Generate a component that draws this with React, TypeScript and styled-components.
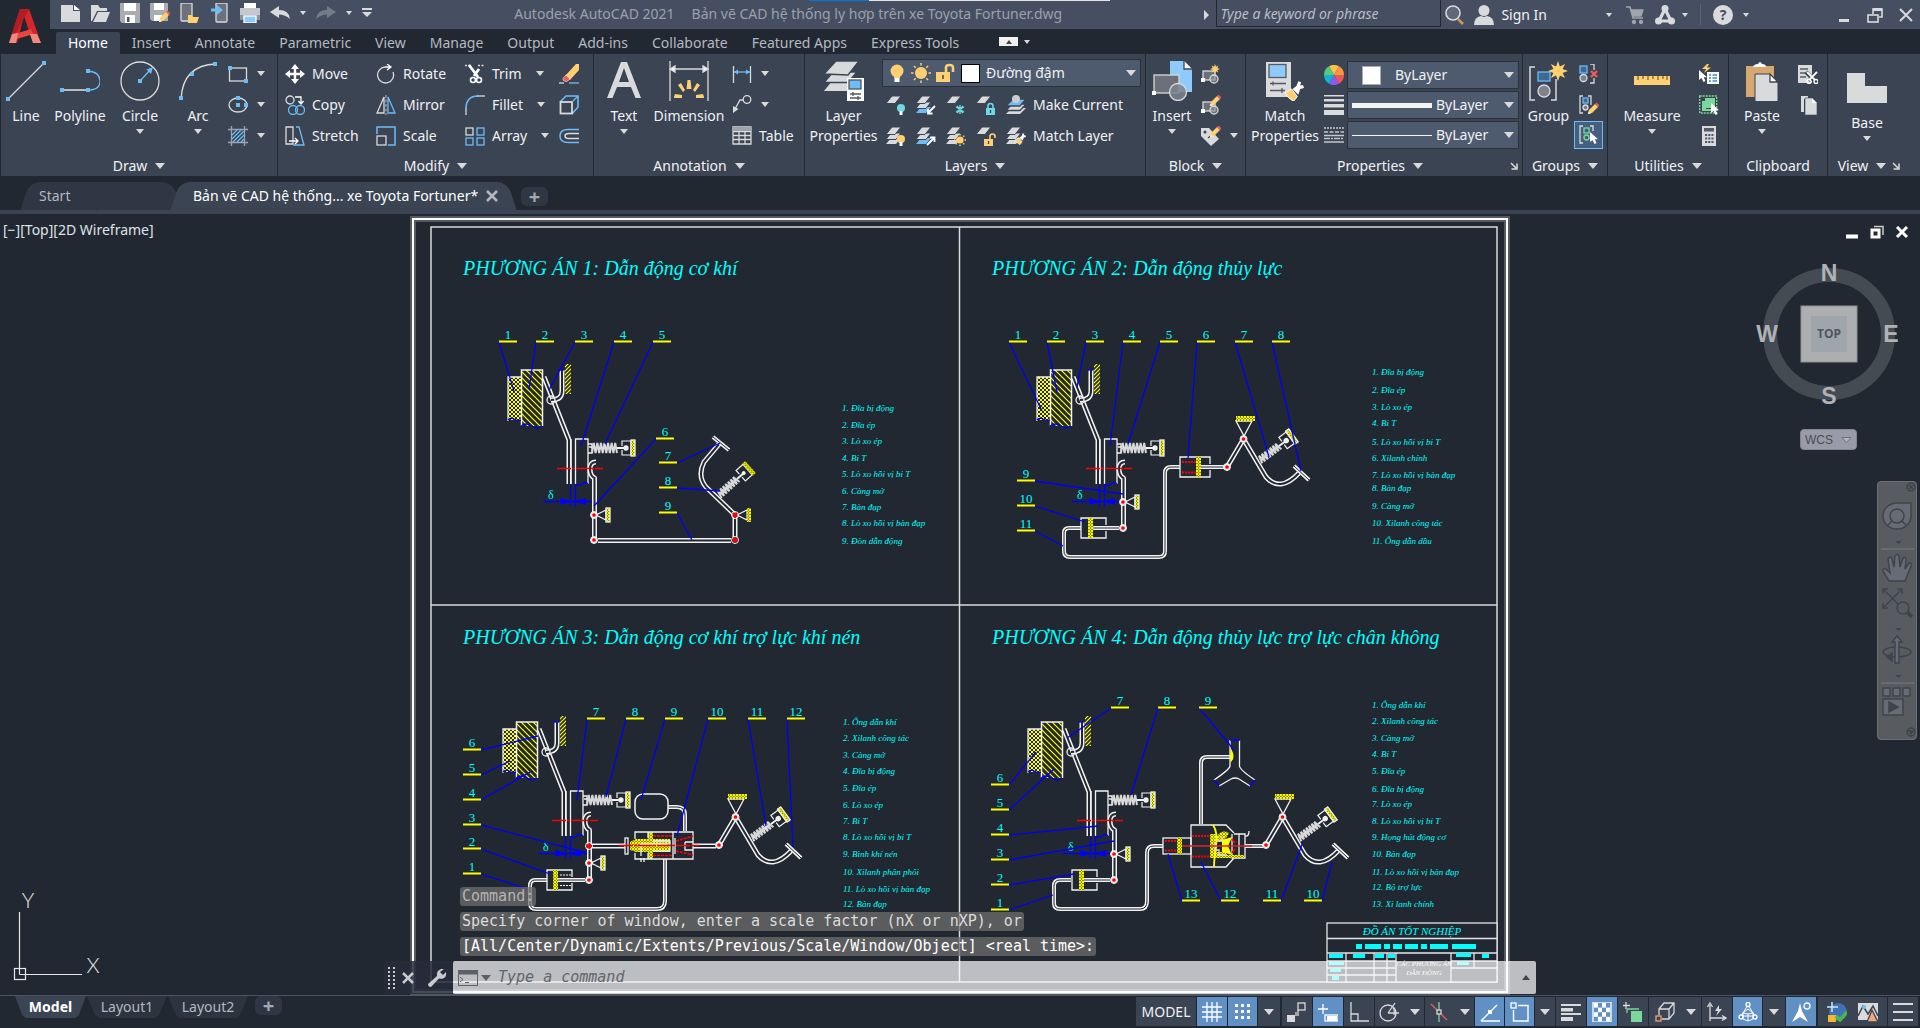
import React from "react";
import styled, { createGlobalStyle, css } from "styled-components";

const C = {
  ink: "#222831",
  panel: "#3b4453",
  title: "#464f61",
  field: "#4e5a6e",
  text: "#f0f1f3",
  dim: "#b4b9c1",
  g: "#d9dadb",
  b: "#6cbcf7",
  y: "#ffcf70",
  r: "#ef5b5b",
  gr: "#7bd79c",
};
const UI = '"Noto Sans", "Open Sans", sans-serif';
const MONO = '"DejaVu Sans Mono", monospace';

const Global = createGlobalStyle`
  * { box-sizing: border-box; }
  html, body { margin: 0; height: 100%; background: ${C.ink}; }
  body { font: 14px/20px ${UI}; color: ${C.text}; overflow: hidden; }
  button, select, input { font: inherit; color: inherit; background: none; border: 0; padding: 0; margin: 0; }
  button { cursor: pointer; white-space: nowrap; }
  svg { display: block; flex: none; }
`;

const Shell = styled.div`
  display: flex;
  flex-direction: column;
  height: 100vh;
`;

/* ---------- icons ---------- */
const Svg = ({ s = 20, children }: { s?: number; children: React.ReactNode }) => (
  <svg width={s} height={s} viewBox={`0 0 ${s} ${s}`} fill="none" stroke={C.g} strokeWidth="1.3" aria-hidden="true">
    {children}
  </svg>
);
const Dot = ({ x, y, c = C.b }: { x: number; y: number; c?: string }) => (
  <rect x={x - 2} y={y - 2} width="4" height="4" fill={c} stroke="none" />
);
const Caret = ({ w = 8, c = C.g }: { w?: number; c?: string }) => (
  <svg width={w} height={w / 2 + 1} viewBox={`0 0 ${w} ${w / 2 + 1}`} aria-hidden="true">
    <path d={`M0 0H${w}L${w / 2} ${w / 2 + 1}Z`} fill={c} />
  </svg>
);
const Launch = () => (
  <svg width="8" height="8" viewBox="0 0 8 8" stroke={C.g} fill="none" aria-hidden="true">
    <path d="M1 1L6 6M7 1.500V7H1.500" strokeWidth="1.500" />
  </svg>
);
const Pencil = ({ x = 0, y = 0 }) => (
  <g transform={`translate(${x} ${y})`} stroke="none">
    <path d="M0 10L1 6L7 0L10 3L4 9Z" fill={C.y} />
    <path d="M7 0L8.500 -1.500L11.500 1.500L10 3Z" fill={C.r} />
    <path d="M0 10L.6 7.500L2.500 9.400Z" fill="#fff" />
  </g>
);
const Cursor = ({ x = 0, y = 0 }) => (
  <path transform={`translate(${x} ${y})`} d="M0 0V10L2.500 8L4.500 12L6.500 11L4.700 7.300H8Z" fill="#fff" stroke="none" />
);
const Sheets = ({ last = C.g, n = 3 }: { last?: string; n?: number }) => (
  <g stroke="none">
    {n > 2 && <path d="M0 18L5 12H15L10 18Z" fill={last} />}
    {n > 2 && <path d="M0 13.500L5 7H15L10 13.500Z" fill={C.g} stroke={C.panel} strokeWidth="1" />}
    <path d="M0 8.500L6 1H15L9 8.500Z" fill={C.g} stroke={C.panel} strokeWidth="1" />
  </g>
);
const Bulb = ({ x = 0, y = 0, c = C.y }) => (
  <g transform={`translate(${x} ${y})`} stroke="none">
    <circle cx="4" cy="4" r="4" fill={c} />
    <rect x="2.500" y="7" width="3" height="4" fill="#fff" />
  </g>
);
const Lock = ({ x = 0, y = 0, c = C.y, open = false }) => (
  <g transform={`translate(${x} ${y})`}>
    <rect x="0" y="5" width="9" height="7" fill={c} stroke="none" />
    <path d={open ? "M6 5V2.500Q6 0 8.500 0T11 2.500V4" : "M2 5V3Q2 .5 4.500 .5T7 3V5"} stroke={c} strokeWidth="1.600" />
    <path d="M4.500 7V10" stroke={C.panel} />
  </g>
);
const SunRays = ({ cx, cy, r }: { cx: number; cy: number; r: number }) => (
  <g stroke={C.y} strokeWidth="1.500">
    <circle cx={cx} cy={cy} r={r * 0.6} fill={C.y} stroke="none" />
    {[0, 45, 90, 135, 180, 225, 270, 315].map((a) => (
      <path key={a} d={`M${cx} ${cy - r}V${cy - r * 0.75}`} transform={`rotate(${a} ${cx} ${cy})`} />
    ))}
  </g>
);
const Star = ({ cx, cy, r }: { cx: number; cy: number; r: number }) => {
  const p = Array.from({ length: 16 }, (_, i) => {
    const q = i % 2 ? r * 0.5 : r;
    return `${(cx + q * Math.sin((i * Math.PI) / 8)).toFixed(1)},${(cy - q * Math.cos((i * Math.PI) / 8)).toFixed(1)}`;
  });
  return <polygon points={p.join(" ")} fill={C.y} stroke="none" />;
};
const BlockMark = () => (
  <g>
    <rect x="2" y="7" width="12" height="9" fill="#6b707b" />
    <circle cx="13" cy="15" r="4" fill="#8a8e97" fillOpacity=".6" />
    <Dot x={2} y={16} c="#fff" />
  </g>
);
const Brush = ({ x = 0, y = 0, k = 1 }) => (
  <g transform={`translate(${x} ${y}) scale(${k})`} stroke="none">
    <path d="M0 5L7 1L13 9L9 14Q3 11 0 5Z" fill={C.y} stroke="#fff" strokeWidth="1" />
    <path d="M8 1L12 -2L14 -7L17 -6L16 -3L19 -3L20 0L16 1L14 7Z" fill="#fff" />
  </g>
);

const I: Record<string, React.ReactNode> = {
  line: <><path d="M2 38L38 2" /><Dot x={2} y={38} /><Dot x={38} y={2} /></>,
  poly: <><path d="M2 29H28" stroke="#fff" /><path d="M28 10Q40 11 40 20T28 29" stroke={C.b} /><Dot x={2} y={29} /><Dot x={28} y={29} /><Dot x={28} y={10} /></>,
  circle: <><circle cx="20" cy="20" r="19" /><path d="M20 20L31 8" stroke={C.b} /><path d="M33 6L31 13L26.500 8.500Z" fill={C.b} stroke="none" /><Dot x={20} y={20} /></>,
  arc: <><path d="M3 38Q5 4 38 3" /><Dot x={3} y={37} /><Dot x={14} y={13} /><Dot x={37} y={3} /></>,
  rect: <><rect x="1.500" y="4" width="17" height="13" /><Dot x={2} y={4} /><Dot x={18} y={17} /></>,
  ellipse: <><ellipse cx="10" cy="10" rx="9" ry="7" /><Dot x={10} y={10} /><Dot x={10} y={3} /><Dot x={18} y={10} /></>,
  hatch: <><path d="M0 3.500H20M0 16.500H20M3.500 0V20M16.500 0V20" stroke="#9da2ab" /><path d="M4 9L9 4M4 13L13 4M5 16L16 5M9 16L16 9M13 16L16 13" stroke={C.b} /></>,
  move: <path d="M10 0L14 5H11.200V8.800H15V6L20 10L15 14V11.200H11.200V15H14L10 20L6 15H8.800V11.200H5V14L0 10L5 6V8.800H8.800V5H6Z" fill="#fff" stroke="none" />,
  copy: <><circle cx="5" cy="5" r="4" /><path d="M10 2H16V8M13.500 6L16 9L18.500 6" stroke="#fff" /><circle cx="8" cy="15" r="4.500" stroke={C.b} /><circle cx="15" cy="15" r="4.500" stroke={C.b} /></>,
  stretch: <><path d="M1 1H8V18H1Z" /><path d="M11 1H14L19 19H8" stroke={C.b} /><path d="M4 15H12M10 12L13 15L10 18" stroke="#fff" /></>,
  rotate: <><path d="M9 3A8 8 0 1 0 17 8" /><path d="M9 3H15M11 0L15 3L11 6" stroke="#fff" /></>,
  mirror: <><path d="M8 2V18H1Z" /><path d="M12 2V18H19Z" stroke={C.b} /><path d="M10 0V20" strokeDasharray="3 1.500" stroke="#9da2ab" /></>,
  scale: <><path d="M1 8V1H19V19H12" stroke={C.b} strokeWidth="1.500" /><rect x="1" y="10" width="9" height="9" /></>,
  trim: <><path d="M0 1.500H6M13 1.500H20" strokeDasharray="2 1.500" /><path d="M4 1L13 13M14 5L9 12" stroke="#fff" strokeWidth="2.800" /><circle cx="8" cy="16" r="2.500" stroke="#fff" strokeWidth="1.600" /><circle cx="14" cy="16" r="2.500" stroke="#fff" strokeWidth="1.600" /></>,
  fillet: <><path d="M1 20V13" /><path d="M1 14Q1 1 13 1" stroke={C.b} strokeWidth="1.600" /><path d="M12 1H20" /></>,
  array: <><rect x="1" y="2" width="7" height="7" /><rect x="12" y="2" width="7" height="7" stroke={C.b} /><rect x="1" y="12" width="7" height="7" stroke={C.b} /><rect x="12" y="12" width="7" height="7" stroke={C.b} /></>,
  erase: <><path d="M17 0H20V6L11 16L6 12Z" fill={C.y} stroke="none" /><path d="M7 11L11 15Q8 19 5 17T7 11Z" fill={C.r} stroke="#fff" strokeWidth=".5" /><path d="M0 19H5" /><path d="M10 19H20" stroke={C.b} /></>,
  solid: <><path d="M1 7L7 1H19V12L13 19" stroke={C.b} strokeWidth="1.600" /><rect x="1.500" y="7" width="11.500" height="11.500" stroke="#d9dadb" strokeWidth="1.800" /><path d="M13 7L19 1" stroke={C.b} /></>,
  offset: <><path d="M20 3.500H9Q1 3.500 1 10T9 16.500H20" stroke={C.b} strokeWidth="1.500" /><path d="M20 7.500H10Q6 7.500 6 10T10 12.500H20" strokeWidth="1.500" /></>,
  text: <path d="M17 1H23L37 37H31.500L27 26H13L8.500 37H3ZM20 7L15 21H25Z" fill={C.g} stroke="none" fillRule="evenodd" />,
  dim: <><path d="M1 0V40M39 0V40" /><path d="M2 8H38" /><path d="M1 8L6 5V11ZM39 8L34 5V11Z" fill="#fff" /><path d="M18.500 19H21.500L22.500 28H17.500ZM9 24L12 22L16 29L14 31ZM31 24L28 22L24 29L26 31ZM5 36L6 33L13 34V37H5ZM35 36L34 33L27 34V37H35Z" fill={C.y} stroke="none" /></>,
  linear: <><path d="M1.500 2V19M18.500 2V19" /><path d="M2 8H18" stroke={C.b} /><path d="M2 8L6 5.500V10.500ZM18 8L14 5.500V10.500Z" fill={C.b} stroke="none" /></>,
  leader: <><circle cx="15" cy="4.500" r="3.800" /><path d="M11 5H8L3 14" /><path d="M1 18V11L6.500 14Z" fill={C.g} stroke="none" /></>,
  table: <><path d="M1 1H19V18H1ZM1 5.500H19M1 9.500H19M1 13.500H19M7 5V18M13 5V18" /><path d="M1 1H19V5H1Z" fill="#9da2ab" stroke="none" /></>,
  layerProps: <g stroke="none"><path d="M0 30L8 20H30L24 30Z" fill={C.g} /><path d="M0 21.500L9 11H33L24 21.500Z" fill={C.g} stroke={C.panel} strokeWidth="1.500" /><path d="M0 13L12 0H35L24 14Z" fill={C.g} stroke={C.panel} /><rect x="23" y="17" width="17" height="23" fill="#fff" /><rect x="25" y="19" width="12" height="9" fill={C.b} stroke="#555" /><path d="M26 33H37M26 37H37M29 31V35M34 35V39" stroke="#555" /></g>,
  lOff: <><Sheets n={1} /><Bulb x={11} y={9} c="#6ed8e4" /></>,
  lIso: <><Sheets last={C.b} /><path d="M19 11L12 18M12 14V18.500H16.500" stroke="#fff" strokeWidth="1.800" /></>,
  lFrz: <><Sheets n={1} /><path d="M14 10V19M10 12L18 17M18 12L10 17M11 11L17 18M17 11L11 18" stroke="#6ed8e4" strokeWidth="1.400" /></>,
  lLock: <><Sheets n={1} /><Lock x={10} y={8} c="#6ed8e4" /></>,
  lCur: <><path d="M0 19L6 13H20L14 19Z" fill={C.g} stroke="none" /><path d="M0 15.500L6 9H20L14 15.500Z" fill={C.g} stroke={C.panel} /><path d="M0 11L7 4H20L14 11Z" fill={C.b} stroke={C.panel} /><circle cx="10" cy="4" r="4" fill="#c9cbce" stroke="none" /></>,
  lOn: <><Sheets /><Bulb x={11} y={9} /></>,
  lUniso: <><Sheets last={C.b} /><path d="M11 19L18 12M14 11.500H18.500V16" stroke="#fff" strokeWidth="1.800" /></>,
  lThaw: <><Sheets /><SunRays cx={14} cy={14} r={6} /></>,
  lUnlock: <><Sheets n={1} /><Lock x={8} y={8} open /></>,
  lMatch: <><Sheets /><Brush x={9} y={11} k={0.55} /></>,
  bulb: <><circle cx="10" cy="8" r="6.500" fill={C.y} stroke="none" /><path d="M7 12H13V15H7Z" fill={C.y} stroke="none" /><rect x="7.500" y="15" width="5" height="4" fill="#fff" stroke="none" /></>,
  sun: <SunRays cx={10} cy={10} r={10} />,
  unlock: <g><rect x="1" y="9" width="14" height="10" fill={C.y} stroke="none" /><path d="M11 9V4.500Q11 2 14.500 2T18 4.500V9" stroke={C.y} strokeWidth="2.600" /><path d="M8 12V16" stroke={C.panel} strokeWidth="1.500" /></g>,
  insert: <><path d="M18 0H32L40 8V31H18Z" fill="#8ecbfa" stroke="none" /><path d="M32 0V8H40" fill="#fff" stroke={C.panel} /><rect x="2" y="14" width="25" height="18" fill="#6b707b" /><circle cx="26" cy="31" r="8.500" fill="#7d828c" fillOpacity=".85" /><Dot x={2} y={32} c="#fff" /></>,
  bNew: <><BlockMark /><Star cx={14} cy={5} r={5} /></>,
  bEdit: <><BlockMark /><Pencil x={9} y={1} /></>,
  bAttr: <><path d="M0 2H8L18 13L10 20L0 10Z" fill={C.g} stroke="none" /><circle cx="4" cy="6" r="1.500" fill={C.panel} stroke="none" /><path d="M7 12L12 8" stroke={C.panel} /><Pencil x={9} y={1} /></>,
  match: <><rect x="1" y="1" width="25" height="35" fill={C.g} stroke="none" /><rect x="4" y="3.500" width="17" height="13" fill="#8ecbfa" stroke="#555b66" /><path d="M5 22.500H21M8 20.500V24.500M5 29.500H20M17 27V32" stroke="#555b66" /><Brush x={20} y={27} k={0.95} /></>,
  wheel: <g stroke="none">{["#ffc247", "#ff9440", "#e95757", "#8b5cf0", "#15b1d4", "#52cd7d"].map((c, i) => <path key={c} d="M10 10L5 1.340A10 10 0 0 1 15 1.340Z" fill={c} transform={`rotate(${i * 60} 10 10)`} />)}</g>,
  lw: <g fill={C.g} stroke="none"><rect y="0" width="20" height="1.500" /><rect y="4" width="20" height="2.500" /><rect y="9" width="20" height="3.500" /><rect y="15" width="20" height="5" /></g>,
  lt: <g stroke="#c4c7cc"><path d="M0 3H20" strokeDasharray="2 1" /><path d="M0 7H20" strokeDasharray="4 1.500" /><path d="M0 10.500H20M0 17H20" /><path d="M0 13.500H20" strokeDasharray="6 1 2 1" /></g>,
  group: <><path d="M6 6H1V39H6M22 39H27V18" strokeWidth="1.500" /><rect x="9" y="11" width="12" height="9" fill="#3f6892" stroke={C.b} /><circle cx="15" cy="30" r="6" fill="#7d828c" /><Star cx={29} cy={10} r={10} /></>,
  ungroup: <><rect x="1" y="2" width="7" height="7" fill="#3f6892" stroke={C.b} /><circle cx="4.500" cy="14" r="3.500" fill="#7d828c" /><path d="M11 0H15V6M11 19H15V14" /><path d="M12 7L18 13M18 7L12 13" stroke={C.r} strokeWidth="2.400" /></>,
  gedit: <><path d="M4 1H1V18H4M9 1H12V10" /><rect x="4" y="3" width="5" height="5" fill="#3f6892" stroke={C.b} /><circle cx="6.500" cy="12.500" r="2.500" fill="#7d828c" /><Pencil x={9} y={9} /></>,
  gsel: <><path d="M4 1H1V18H4M11 1H14V6" /><rect x="5" y="3" width="5" height="5" stroke={C.gr} /><circle cx="7.500" cy="12.500" r="2.500" stroke={C.gr} /><Cursor x={11} y={7} /></>,
  measure: <><path d="M2 15H38V24H2Z" fill={C.y} stroke="none" /><path d="M6 15V19M11 15V18M16 15V19M21 15V18M26 15V19M31 15V18M35 15V19" stroke="#7a6a45" /></>,
  qsel: <><rect x="8" y="8" width="12" height="12" fill="#fff" stroke="none" /><path d="M10 11H12M10 14H12M10 17H12M13.500 11H18M13.500 14H18M13.500 17H18" stroke="#3a8bd0" /><Cursor x={0} y={6} /><path d="M8 0L3 5H7L5 9L12 3.500H8L10 0Z" fill={C.y} stroke="none" /></>,
  selAll: <><rect x=".7" y="1" width="17" height="17" stroke={C.gr} strokeDasharray="2 1" /><path d="M3 6H7V14H14V16H3Z" fill={C.gr} stroke="none" /><rect x="6" y="3" width="10" height="10" fill={C.gr} stroke="none" /><Cursor x={12} y={8} /></>,
  calc: <><rect x="3" y="0" width="14" height="20" fill={C.g} stroke="none" /><rect x="5" y="2" width="10" height="3.500" fill="#555b66" stroke="none" /><path d="M6 9H14.500M6 12.500H14.500M6 16H14.500" stroke="#555b66" strokeWidth="2.200" strokeDasharray="2.200 1" /></>,
  paste: <g stroke="none"><rect x="4" y="5" width="28" height="31" fill="#d7a970" /><path d="M11 6Q12 3 16 3Q17 1 18 1T20 3Q24 3 24 6Z" fill="#fff" /><path d="M13 13H28L36 21V41H13Z" fill={C.g} stroke={C.panel} strokeWidth="1" /><path d="M28 13V21H36Z" fill="#fff" stroke={C.panel} /></g>,
  cut: <><path d="M0 1H14V19H0Z" fill={C.g} stroke="none" /><path d="M2 5H10M2 9H11M2 13H8" stroke="#555b66" /><path d="M8 8L17 17M19 8L11 17" stroke={C.panel} strokeWidth="4" /><path d="M9 8L17 16M19 8L11 16" stroke="#fff" strokeWidth="1.800" /><circle cx="11" cy="17.500" r="2" stroke="#fff" /><circle cx="18" cy="17.500" r="2" stroke="#fff" /></>,
  clip: <g stroke="none"><path d="M3 1H10V4H6V17H3Z" fill={C.g} /><path d="M7 3H14L19 8V20H7Z" fill={C.g} stroke={C.panel} strokeWidth=".6" /><path d="M14 3V8H19Z" fill="#fff" /></g>,
  base: <path d="M1 5H18V18H40V35H0V5Z" fill={C.g} stroke="none" />,
  new: <g stroke="none"><path d="M1 2H13V8H20V19H1Z" fill={C.g} /><path d="M14 2L20 7H14Z" fill="#fff" /></g>,
  open: <path d="M1 18V2H8L10 5H17V8H7L2 18ZM3 19L8 9H20L16 19Z" fill={C.g} stroke="none" />,
  save: <><path d="M0 0H20V20H2L0 18Z" fill="#a9acb1" stroke="none" /><rect x="4" y="0" width="12" height="8" fill="#fff" stroke="none" /><rect x="5" y="12" width="10" height="8" fill="#fff" stroke="none" /><rect x="7" y="14" width="2.500" height="5" fill="#555" stroke="none" /></>,
  saveas: <><path d="M0 0H18V18H2L0 16Z" fill="#a9acb1" stroke="none" /><rect x="4" y="0" width="10" height="7" fill="#fff" stroke="none" /><rect x="4" y="12" width="8" height="6" fill="#fff" stroke="none" /><Pencil x={9} y={9} /></>,
  openWeb: <><rect x="1" y="0" width="11" height="18" rx="1" fill="#6c717b" stroke={C.g} /><path d="M8 12H12L13 14H19L17 20H8Z" fill={C.y} stroke="none" /></>,
  saveWeb: <><rect x="6" y="0" width="11" height="19" rx="1" fill="#6c717b" stroke={C.g} /><path d="M1 5.500H7V2L13 7L7 12V8.500H1Z" fill={C.b} stroke="none" /></>,
  print: <g stroke="none"><rect x="4" y="0" width="12" height="6" fill="#fff" /><path d="M0 5H20V17H0Z" fill="#c4c7cc" /><path d="M0 12H20V17H0Z" fill="#8f949c" /><rect x="4" y="13" width="12" height="7" fill="#8ecbfa" stroke="#fff" /></g>,
  undo: <path d="M0 9L9 3V7Q19 7 20 16Q15 11.500 9 11.500V15Z" fill={C.g} stroke="none" />,
  redo: <path d="M20 9L11 3V7Q1 7 0 16Q5 11.500 11 11.500V15Z" fill="#747c8a" stroke="none" />,
  search: <><circle cx="8" cy="8" r="7" fill="#5f6878" strokeWidth="1.600" /><path d="M13 14L18 19" stroke="#c99a5b" strokeWidth="2.500" /></>,
  user: <g fill={C.g} stroke="none"><circle cx="10" cy="5.500" r="5.500" /><path d="M0 20Q0 12 7 11L10 12L13 11Q20 12 20 20Z" /></g>,
  cart: <g stroke="#9fa4ad"><path d="M0 2H4L7 13H17" strokeWidth="1.500" /><path d="M5 5H17L15 11H7Z" fill="#9fa4ad" /><circle cx="8" cy="17" r="1.500" fill="#9fa4ad" /><circle cx="15" cy="17" r="1.500" fill="#9fa4ad" /></g>,
  a360: <><path d="M10 4L4 16H16Z" strokeWidth="3.200" /><g fill={C.g} stroke="none"><circle cx="10" cy="3.500" r="3.500" /><circle cx="3.500" cy="16" r="3.500" /><circle cx="16.500" cy="16" r="3.500" /></g></>,
  min: <path d="M5 15.500H15" strokeWidth="3" />,
  restore: <><rect x="3" y="10" width="10" height="7" strokeWidth="1.600" /><path d="M8 9V4H17V12H14" strokeWidth="1.600" /><path d="M8 4.500H17" strokeWidth="3" /></>,
  close: <path d="M4 4L16 16M16 4L4 16" strokeWidth="2" />,
  sGrid: <path d="M5 0V20M10 0V20M15 0V20M0 5H20M0 10H20M0 15H20" stroke="#fff" strokeWidth="1.300" />,
  sSnap: <g fill="#fff" stroke="none">{[2, 8, 14].map((x) => [2, 8, 14].map((y) => <rect key={`${x}-${y}`} x={x} y={y} width="3" height="3" />))}</g>,
  sInfer: <><rect x="0" y="13" width="8" height="7" fill={C.g} stroke="none" /><rect x="11" y="1" width="7" height="7" /><path d="M9 14V10M11 8V14" /></>,
  sDyn: <><path d="M5 2V12M0 7H10" stroke="#fff" strokeWidth="1.300" /><rect x="7" y="13" width="13" height="6" stroke="#fff" /><rect x="9" y="14" width="10" height="5" fill="#fff" stroke="none" /></>,
  sOrtho: <><path d="M2 0V19H20" /><path d="M2 12H9V19" /></>,
  sPolar: <><circle cx="9" cy="11" r="8" /><path d="M9 11H20M9 11L16 1" /><path d="M14 6Q16 8 15 13" /></>,
  sIso: <><path d="M10 0V20" stroke={C.gr} /><path d="M2 2L18 18" stroke={C.r} /><rect x="8" y="8" width="4" height="4" fill={C.panel} /></>,
  sTrack: <><path d="M1 19L17 3M1 19H20" stroke="#fff" strokeWidth="1.400" /><Dot x={10} y={10} c="#fff" /></>,
  sOsnap: <><rect x="1" y="1" width="5" height="5" stroke="#fff" /><path d="M8 3.500H18V19H3.500V8" stroke="#fff" strokeWidth="1.400" /></>,
  sLw: <g fill={C.g} stroke="none"><rect y="2" width="20" height="2" /><rect y="6" width="12" height="3.500" /><rect y="11" width="20" height="2" /><rect y="15" width="12" height="4" /></g>,
  sTrans: <><rect x="1" y="0" width="18" height="20" stroke="#fff" strokeWidth="1.300" /><g fill="#fff" stroke="none">{[0, 1, 2, 3].map((r) => [0, 1].map((c) => <rect key={`${r}${c}`} x={2 + c * 8 + (r % 2) * 4} y={1 + r * 4.600} width="4" height="4.600" />))}</g></>,
  sCycle: <><path d="M3 0V7M0 3.500H7" /><path d="M4 11V7H16" stroke={C.gr} /><rect x="8" y="9" width="11" height="11" fill={C.gr} stroke="none" /></>,
  s3d: <><path d="M4 13V7L9 1H19V11L14 17H7M4 7H14V17M14 7L19 1" /><rect x="1" y="14" width="5" height="5" stroke="#f0a070" /></>,
  sUcs: <><path d="M3 19V3M3 16H18M.5 5L3 1L5.500 5M15 13.500L19 16L15 18.500" /><path d="M12 3L8 9H11L9 14L15 7H12Z" fill={C.g} stroke="none" /></>,
  sFilt: <><path d="M10 3L17 14H3ZM10 7L5 11V17L10 19L15 17V11ZM10 12V19M5 11L10 12L15 11" stroke="#fff" strokeWidth="1" /><circle cx="10" cy="2.500" r="2" fill="#6090c4" stroke="#fff" /><circle cx="3" cy="15" r="2" fill="#6090c4" stroke="#fff" /><circle cx="17" cy="15" r="2" fill="#6090c4" stroke="#fff" /></>,
  sAnno: <><path d="M9 1L11 9L17 20L9 15L1 20L7 9Z" fill="#fff" stroke="none" /><circle cx="16" cy="4" r="3" stroke="#fff" /></>,
  sWork: <g stroke="none"><circle cx="11" cy="10" r="9" fill="#3f72b5" /><path d="M5 0V10M0 5H11" stroke="#cfe6ff" strokeWidth="1.500" /><path d="M1 13H9V20H1Z" fill="#f5b733" /><path d="M9 14L13 18L20 10" stroke="#4cb748" strokeWidth="3.500" fill="none" /></g>,
  sMon: <g stroke="none"><path d="M0 18V1H20V18Z" fill={C.g} /><path d="M0 14L5 4L10 12L15 4L20 14" stroke={C.panel} strokeWidth="1.500" /><circle cx="6" cy="5" r="2" fill={C.b} /><path d="M14 8L20 20H9Z" fill="#f2a679" stroke={C.panel} /></g>,
  sMenu: <path d="M0 2H20M0 10H20M0 18H20" strokeWidth="2" />,
};
const Ico = ({ n, s = 20 }: { n: string; s?: number }) => <Svg s={s}>{I[n]}</Svg>;

/* ---------- header ---------- */
const Header = styled.header`
  display: grid;
  grid-template: 29px 25px / 50px 1fr;
  flex: none;
`;
const AppMenu = styled.button`
  grid-row: span 2;
  display: grid;
  place-items: center;
`;
const TitleBar = styled.div`
  position: relative;
  display: flex;
  align-items: center;
  background: ${C.title};
  padding-right: 4px;
`;
const Quick = styled.div`
  display: flex;
  align-items: center;
  gap: 10px;
  padding-left: 10px;
  padding-bottom: 4px;
`;
const IconBtn = styled.button<{ $ml?: number }>`
  display: flex;
  align-items: center;
  margin-left: ${(p) => p.$ml || 0}px;
`;
const Caption = styled.div`
  flex: 1;
  display: flex;
  justify-content: center;
  gap: 17px;
  color: #9ba1ac;
  white-space: nowrap;
  overflow: hidden;
  padding-bottom: 1px;
`;
const Progress = styled.div`
  position: absolute;
  top: 0;
  left: 759px;
  width: 301px;
  height: 1px;
  background: linear-gradient(90deg, #0078d7 60px, #e4e4e4 60px);
`;
const SearchBox = styled.input`
  width: 225px;
  height: 27px;
  margin: 0 4px 2px 7px;
  padding: 0 3px;
  border: 1px solid ${C.ink};
  border-top: 0;
  font-style: italic;
  &::placeholder { color: #b9bdc5; opacity: 1; }
`;
const Rule = styled.span`
  width: 1px;
  height: 21px;
  margin-left: 12px;
  background: #5a6376;
`;
const HelpMark = styled.span`
  width: 20px;
  height: 20px;
  border-radius: 50%;
  background: ${C.g};
  color: ${C.title};
  font-weight: 700;
  text-align: center;
`;
const Tabs = styled.nav`
  display: flex;
  align-items: flex-end;
  padding-left: 6px;
`;
const Tab = styled.button<{ $on?: boolean }>`
  height: 22px;
  padding: 0 12px;
  color: ${(p) => (p.$on ? "#fff" : C.dim)};
  background: ${(p) => (p.$on ? C.panel : "none")};
  border-radius: 2px 2px 0 0;
`;
const RibbonToggle = styled.button`
  display: flex;
  align-items: center;
  gap: 6px;
  height: 22px;
  margin-left: 28px;
  padding-bottom: 3px;
`;
const ToggleFace = styled.span`
  display: grid;
  place-items: center;
  width: 19px;
  height: 9px;
  background: #f0f0f0;
  svg { transform: rotate(180deg); }
`;

/* ---------- ribbon ---------- */
const Ribbon = styled.div`
  display: flex;
  gap: 1px;
  flex: none;
  height: 122px;
  padding-left: 1px;
`;
const Panel = styled.section<{ $w?: number }>`
  display: flex;
  flex-direction: column;
  background: ${C.panel};
  ${(p) => (p.$w ? css`flex: none; width: ${p.$w}px;` : css`flex: 1; min-width: 90px;`)}
`;
const Body = styled.div`
  display: flex;
  flex: 1;
  min-height: 0;
`;
const Foot = styled.div<{ $max?: number }>`
  display: flex;
  align-items: center;
  height: 21px;
  padding: 0 4px;
  max-width: ${(p) => (p.$max ? `${p.$max}px` : "none")};
`;
const FootBtn = styled.button`
  display: flex;
  flex: 1;
  align-items: center;
  justify-content: center;
  gap: 8px;
`;
const Big = styled.button<{ $w: number; $mid?: boolean }>`
  display: flex;
  flex: none;
  flex-direction: column;
  align-items: center;
  justify-content: ${(p) => (p.$mid ? "center" : "flex-start")};
  width: ${(p) => p.$w}px;
  padding-top: ${(p) => (p.$mid ? 0 : 7)}px;
  > span { margin: 5px 0 3px; }
`;
const Col = styled.div<{ $ml?: number; $w?: number }>`
  display: flex;
  flex: none;
  flex-direction: column;
  padding-top: 4px;
  margin-left: ${(p) => p.$ml || 0}px;
  width: ${(p) => (p.$w ? `${p.$w}px` : "auto")};
`;
const Row = styled.button`
  display: flex;
  align-items: center;
  gap: 7px;
  height: 31px;
  svg + svg { margin-left: 2px; }
  span + svg { margin-left: 7px; }
`;
const Combo = styled.label`
  display: flex;
  align-items: center;
  gap: 4px;
  height: 28px;
  padding: 0 4px;
  background: ${C.field};
  border: 1px solid #2a313c;
`;
const Pick = styled.select`
  flex: 1;
  min-width: 0;
  appearance: none;
  outline: 0;
`;
const Swatch = styled.span<{ $edge: string; $mx?: number }>`
  flex: none;
  width: 19px;
  height: 19px;
  margin: 0 ${(p) => p.$mx || 2}px;
  background: #fff;
  border: 1px solid ${(p) => p.$edge};
`;
const Stroke = styled.span<{ $h: number }>`
  flex: none;
  width: 80px;
  height: ${(p) => p.$h}px;
  background: #f4f4f4;
`;
const LayerBox = styled.div`
  display: flex;
  flex-direction: column;
  flex: 1;
  padding: 5px 4px 0 0;
  ${Combo} { margin-bottom: 2px; }
`;
const LayerRow = styled.div`
  display: flex;
  align-items: center;
  gap: 10px;
  height: 31px;
  padding-left: 4px;
`;
const PropGrid = styled.div`
  display: grid;
  flex: 1;
  grid-template-columns: 20px 1fr;
  grid-auto-rows: 28px;
  gap: 2px 3px;
  align-items: center;
  padding: 7px 3px 0 0;
`;
const ToggleBtn = styled.button<{ $on?: boolean }>`
  display: grid;
  place-items: center;
  width: 29px;
  height: 31px;
  ${(p) => p.$on && css`background: #44607e; border: 1px solid ${C.b}; height: 28px; margin-top: 1px;`}
`;

/* ---------- document tabs ---------- */
const DocTabs = styled.div`
  display: flex;
  flex: none;
  align-items: flex-end;
  height: 38px;
  padding-left: 22px;
  border-bottom: 4px solid ${C.panel};
`;
const DocTab = styled.div<{ $on?: boolean; $w: number }>`
  position: relative;
  display: flex;
  align-items: center;
  gap: 8px;
  height: 28px;
  width: ${(p) => p.$w}px;
  margin-left: ${(p) => (p.$on ? -8 : 0)}px;
  padding-left: ${(p) => (p.$on ? 21 : 17)}px;
  color: ${(p) => (p.$on ? "#fff" : C.dim)};
  isolation: isolate;
  white-space: nowrap;
  &::before, &::after {
    content: "";
    position: absolute;
    z-index: -1;
    inset: 0 50% 0 3px;
    background: ${(p) => (p.$on ? C.panel : "#2f3744")};
    border-radius: 10px 0 0 0;
    transform: skewX(-18deg);
  }
  &::after {
    inset: 0 3px 0 45%;
    border-radius: 0 10px 0 0;
    transform: skewX(18deg);
  }
`;
const AddTab = styled.button`
  width: 27px;
  height: 19px;
  margin: 0 0 4px 6px;
  background: #2f3744;
  color: #a4a9b1;
  border-radius: 6px;
  font-size: 20px;
  font-weight: 700;
  line-height: 18px;
`;

/* ---------- canvas ---------- */
const Canvas = styled.main`
  position: relative;
  flex: 1;
  min-height: 0;
  > svg { width: 100%; height: 100%; }
`;
const ViewLabel = styled.div`
  position: absolute;
  top: 6px;
  left: 3px;
  color: #dfe3e8;
`;
const WinButtons = styled.div`
  position: absolute;
  top: 8px;
  right: 8px;
  display: flex;
  gap: 5px;
`;
const Cube = styled.div`
  position: absolute;
  top: 44px;
  right: 16px;
  width: 150px;
  height: 150px;
`;
const Wcs = styled.button`
  position: absolute;
  top: 215px;
  right: 63px;
  display: flex;
  align-items: center;
  justify-content: space-between;
  width: 57px;
  height: 21px;
  padding: 0 4px;
  background: #9a9ba8;
  border: 1px solid #83849a;
  border-radius: 4px;
  color: #4a4c55;
  font: 12px/18px "Liberation Sans", Arial, sans-serif;
`;
const NavBar = styled.div`
  position: absolute;
  top: 267px;
  right: 3px;
  display: flex;
  flex-direction: column;
  align-items: center;
  width: 40px;
  height: 259px;
  background: #585c60;
  border: 1px solid #6c7074;
  border-radius: 4px;
`;
const Ucs = styled.div`
  position: absolute;
  left: 10px;
  bottom: 8px;
`;
const CommandArea = styled.div`
  position: absolute;
  left: 20%;
  right: 20%;
  bottom: 1px;
  font: 15px/19px ${MONO};
`;
const History = styled.div`
  display: flex;
  flex-direction: column;
  align-items: flex-start;
  gap: 6px;
  padding: 0 0 5px 76px;
`;
const Chip = styled.div<{ $c: string }>`
  padding: 0 2px;
  border-radius: 3px;
  background: rgba(110, 110, 110, 0.75);
  color: ${(p) => p.$c};
  white-space: nowrap;
`;
const CommandBar = styled.div`
  display: flex;
  height: 33px;
`;
const Handle = styled.div`
  display: flex;
  align-items: center;
  gap: 7px;
  width: 69px;
  padding-left: 4px;
  background: rgba(38, 44, 57, 0.85);
  border-radius: 3px 0 0 3px;
`;
const CommandField = styled.label`
  display: flex;
  flex: 1;
  align-items: center;
  gap: 3px;
  padding: 0 6px 0 5px;
  background: rgba(252, 252, 253, 0.71);
  border-radius: 2px;
`;
const CommandInput = styled.input`
  flex: 1;
  margin-left: 4px;
  outline: 0;
  color: #333;
  font-style: italic;
  &::placeholder { color: #63666b; opacity: 1; }
`;

/* ---------- status bar ---------- */
const Bottom = styled.footer`
  display: flex;
  flex: none;
  align-items: flex-start;
  justify-content: space-between;
  height: 33px;
  padding: 0 2px 0 15px;
  border-top: 1px solid #4a5361;
`;
const Layouts = styled.div`
  display: flex;
  gap: 1px;
`;
const LayoutTab = styled.button<{ $on?: boolean; $w: number }>`
  width: ${(p) => p.$w}px;
  height: 22px;
  background: ${(p) => (p.$on ? C.panel : "#2c3440")};
  color: ${(p) => (p.$on ? "#fff" : C.dim)};
  font-weight: ${(p) => (p.$on ? 700 : 400)};
  clip-path: polygon(0 0, 100% 0, 90% 86%, 85% 100%, 15% 100%, 10% 86%);
`;
const Status = styled.div`
  display: flex;
  gap: 1px;
  padding-top: 1px;
`;
const StatBtn = styled.button<{ $on?: boolean; $w?: number; $ml?: number }>`
  display: flex;
  align-items: center;
  justify-content: center;
  gap: 11px;
  width: ${(p) => p.$w || 30}px;
  height: 29px;
  margin-left: ${(p) => p.$ml || 0}px;
  background: ${(p) => (p.$on ? "#6090c4" : C.panel)};
`;

/* ---------- drawing parts ---------- */
const W = "#f2f2f2";
const Duo = ({ d, w = 5 }: { d: string; w?: number }) => (
  <g fill="none" strokeLinejoin="round">
    <path d={d} stroke={W} strokeWidth={w} />
    <path d={d} stroke={C.ink} strokeWidth={w - 3} />
  </g>
);
const Joint = ({ x, y }: { x: number; y: number }) => (
  <g>
    <circle cx={x} cy={y} r="3.500" fill="none" stroke={W} strokeWidth="1" />
    <circle cx={x} cy={y} r="2.500" fill="#f00" />
  </g>
);
const Coil = ({ x1, y1, x2, y2, h = 5 }: { x1: number; y1: number; x2: number; y2: number; h?: number }) => {
  const L = Math.hypot(x2 - x1, y2 - y1);
  const a = (Math.atan2(y2 - y1, x2 - x1) * 180) / Math.PI;
  const n = 7;
  let d = `M0 ${h}`;
  for (let i = 0; i < n; i++) d += `L${((i + 0.5) * L) / n} ${-h}L${((i + 1) * L) / n} ${h}`;
  return (
    <g transform={`translate(${x1} ${y1}) rotate(${a})`} fill="none">
      <path d={d} stroke="#d8d8d8" strokeWidth="2" />
      <path d={`M${L} 0H${L + 8}`} stroke={W} strokeWidth="2" />
      <circle cx={L + 9} cy="0" r="2" fill={W} />
      <path d={`M${L + 5} -2V-7H${L + 14}V7H${L + 5}V2`} stroke={W} strokeWidth="1.200" />
      <rect x={L + 14} y="-8" width="4" height="16" fill="url(#dense)" />
    </g>
  );
};
const Anchor = ({ x, y }: { x: number; y: number }) => (
  <g>
    <path d={`M${x + 2} ${y}L${x + 12} ${y - 5}V${y + 5}Z`} fill="none" stroke={W} strokeWidth="1.200" />
    <rect x={x + 12} y={y - 7} width="4" height="14" fill="url(#dense)" />
  </g>
);
const Clutch = ({ dx, dy, pivot, foot }: { dx: number; dy: number; pivot: number; foot: number }) => (
  <g transform={`translate(${dx} ${dy})`} fill="none" stroke={W} strokeWidth="1.300">
    <rect x="508" y="377" width="13" height="43" fill="url(#cross)" stroke="none" />
    <path d="M508 421V377H521" />
    <rect x="522" y="370" width="20" height="56" fill="url(#diag)" stroke="none" />
    <path d="M521.500 426V370H542.500V426" strokeWidth="1.500" />
    <path d="M508 420Q511 417 514 419T521 420M521 426Q527 422 532 426T542 426" stroke="#00f" />
    <Duo d="M544 377L569 440V484" w={5} />
    <Duo d="M562 370V391Q562 400 551 400" w={5} />
    <circle cx="551" cy="400" r="4" />
    <rect x="565" y="364" width="6" height="30" fill="url(#slash)" stroke="none" />
    <path d="M558 370H564" stroke="#00f" />
    <path d="M571 439V484M575.500 484V439H588V484" />
    <path d="M575.500 484Q579 487 582 484T588 484" stroke="#00f" />
    <path d="M588 444H592V453H588M589 447H593" />
    <Coil x1={592} y1={448} x2={617} y2={448} />
    <Duo d={`M596 462Q590 462 590 469T594.500 478V${foot}`} w={5} />
    <path d="M557 468.500H603" stroke="#f00" strokeDasharray="14 1 3 1" />
    <path d="M543 501.500H592M570.500 485V507M575.500 485V507" stroke="#00f" />
    <path d="M561 499L570 501.500L561 504ZM585 499L576 501.500L585 504Z" fill="#00f" stroke="#00f" />
    <text x="548" y="499" fontSize="12" fontFamily="Liberation Serif, serif" fill="#0ff" stroke="none">δ</text>
    <Anchor x={594} y={pivot} />
    <Joint x={594} y={pivot} />
    <Joint x={594} y={foot} />
  </g>
);
const Pedal = ({ dx, dy }: { dx: number; dy: number }) => (
  <g transform={`translate(${dx} ${dy})`} fill="none" stroke={W} strokeWidth="1.300">
    <Duo d="M1227 467L1243.500 439L1266 477Q1280 493 1299 473" />
    <Duo d="M1294 466L1309 480" w={4} />
    <path d="M1236 421H1252L1244 436Z" />
    <rect x="1236" y="416" width="19" height="5" fill="url(#dense)" stroke="none" />
    <Coil x1={1260} y1={460} x2={1279} y2={446} h={4} />
    <Joint x={1243.5} y={439} />
    <Joint x={1227} y={467} />
  </g>
);
const Cylinder = ({ x, y, w, h, px, rod }: { x: number; y: number; w: number; h: number; px: number; rod: number }) => (
  <g fill="none" stroke={W} strokeWidth="1.300">
    <Duo d={`M${px + 5} ${y + h / 2}H${rod}`} w={4} />
    <path d={`M${x + w} ${y + h / 2 - 3}V${y}H${x}V${y + h}H${x + w}V${y + h / 2 + 3}`} />
    <rect x={px} y={y} width="5" height={h} fill="url(#dense)" stroke="none" />
  </g>
);

type Tag = [string, number, number, number, number, boolean?];
const tags: Tag[] = [
  ["1", 499, 342, 514, 391], ["2", 536, 342, 529, 389], ["3", 575, 342, 549, 390], ["4", 614, 342, 581, 446], ["5", 653, 342, 605, 444],
  ["6", 656, 439, 594, 506], ["7", 659, 463, 720, 443, true], ["8", 659, 488, 720, 491, true], ["9", 659, 513, 692, 540, true],
  ["1", 1009, 342, 1042, 411], ["2", 1047, 342, 1057, 392], ["3", 1086, 342, 1077, 387], ["4", 1123, 342, 1110, 446], ["5", 1160, 342, 1128, 444],
  ["6", 1197, 342, 1188, 459], ["7", 1235, 342, 1269, 457], ["8", 1272, 342, 1301, 471],
  ["9", 1017, 481, 1123, 494, true], ["10", 1017, 506, 1085, 522, true], ["11", 1017, 531, 1063, 546, true],
  ["7", 587, 719, 577, 800], ["8", 626, 719, 606, 797], ["9", 665, 719, 641, 800], ["10", 708, 719, 677, 836], ["11", 748, 719, 766, 826], ["12", 787, 719, 793, 847],
  ["6", 463, 750, 538, 736, true], ["5", 463, 775, 510, 761, true], ["4", 463, 800, 532, 771, true], ["3", 463, 825, 587, 853, true], ["2", 463, 849, 550, 874, true], ["1", 463, 874, 527, 889, true],
  ["7", 1111, 708, 1067, 738], ["8", 1158, 708, 1131, 795], ["9", 1199, 708, 1234, 750],
  ["6", 991, 785, 1036, 752, true], ["5", 991, 810, 1054, 769, true], ["4", 991, 835, 1098, 826, true], ["3", 991, 860, 1114, 841, true], ["2", 991, 885, 1074, 874, true], ["1", 991, 910, 1053, 895, true],
  ["13", 1182, 901, 1168, 854], ["12", 1221, 901, 1201, 862], ["11", 1263, 901, 1303, 842, true], ["10", 1304, 901, 1332, 862, true],
];
const legends: { x: number; rows: [number, string][] }[] = [
  { x: 842, rows: [[411, "1. Đĩa bị động"], [428, "2. Đĩa ép"], [444, "3. Lò xo ép"], [461, "4. Bi T"], [477, "5. Lò xo hồi vị bi T"], [494, "6. Càng mở"], [510, "7. Bàn đạp"], [526, "8. Lò xo hồi vị bàn đạp"], [544, "9. Đòn dẫn động"]] },
  { x: 1372, rows: [[375, "1. Đĩa bị động"], [393, "2. Đĩa ép"], [410, "3. Lò xo ép"], [426, "4. Bi T"], [445, "5. Lò xo hồi vị bi T"], [461, "6. Xilanh chính"], [478, "7. Lò xo hồi vị bàn đạp"], [491, "8. Bàn đạp"], [509, "9. Càng mở"], [526, "10. Xilanh công tác"], [544, "11. Ống dẫn dầu"]] },
  { x: 843, rows: [[725, "1. Ống dẫn khí"], [741, "2. Xilanh công tác"], [758, "3. Càng mở"], [774, "4. Đĩa bị động"], [791, "5. Đĩa ép"], [808, "6. Lò xo ép"], [824, "7. Bi T"], [840, "8. Lò xo hồi vị bi T"], [857, "9. Bình khí nén"], [875, "10. Xilanh phân phối"], [892, "11. Lò xo hồi vị bàn đạp"], [907, "12. Bàn đạp"]] },
  { x: 1372, rows: [[708, "1. Ống dẫn khí"], [724, "2. Xilanh công tác"], [741, "3. Càng mở"], [757, "4. Bi T"], [774, "5. Đĩa ép"], [792, "6. Đĩa bị động"], [807, "7. Lò xo ép"], [824, "8. Lò xo hồi vị bi T"], [840, "9. Họng hút động cơ"], [857, "10. Bàn đạp"], [875, "11. Lò xo hồi vị bàn đạp"], [890, "12. Bộ trợ lực"], [907, "13. Xi lanh chính"]] },
];
const titles: [number, number, string][] = [
  [463, 275, "PHƯƠNG ÁN 1: Dẫn động cơ khí"],
  [992, 275, "PHƯƠNG ÁN 2: Dẫn động thủy lực"],
  [463, 644, "PHƯƠNG ÁN 3: Dẫn động cơ khí trợ lực khí nén"],
  [992, 644, "PHƯƠNG ÁN 4: Dẫn động thủy lực trợ lực chân không"],
];
const bars: [number, number, number, number][] = [
  [1356, 944, 6, 5], [1365, 944, 16, 5], [1384, 944, 6, 5], [1393, 944, 9, 5], [1405, 944, 13, 5], [1421, 944, 6, 5], [1430, 944, 18, 5], [1452, 944, 24, 5],
  [1329, 954, 14, 4], [1353, 954, 12, 4], [1375, 954, 9, 4], [1388, 954, 7, 4], [1456, 953, 15, 4], [1482, 954, 7, 4],
  [1329, 962, 15, 3], [1457, 962, 12, 3], [1330, 969, 11, 3], [1332, 976, 7, 4],
];

const Sheet = () => (
  <svg viewBox="0 214 1920 781" role="img" aria-label="Clutch drive schemes">
    <defs>
      <pattern id="cross" width="4" height="4" patternUnits="userSpaceOnUse">
        <path d="M0 0L4 4M4 0L0 4" stroke="#ff0" strokeWidth="1" />
      </pattern>
      <pattern id="diag" width="6" height="6" patternUnits="userSpaceOnUse">
        <path d="M-1 -1L7 7M-1 5L1 7M5 -1L7 1" stroke="#ff0" strokeWidth="1.200" />
      </pattern>
      <pattern id="slash" width="4" height="4" patternUnits="userSpaceOnUse">
        <path d="M-1 5L5 -1M-1 1L1 -1M3 5L5 3" stroke="#ff0" strokeWidth="1.200" />
      </pattern>
      <pattern id="dense" width="3" height="3" patternUnits="userSpaceOnUse">
        <rect width="3" height="3" fill="#8f8f10" />
        <path d="M0 0L3 3M3 0L0 3" stroke="#ff0" strokeWidth=".9" />
      </pattern>
    </defs>
    <rect x="413" y="219" width="1094" height="773" fill="none" stroke="#555a61" strokeWidth="6" />
    <rect x="413" y="219" width="1094" height="773" fill="none" stroke="#fff" strokeWidth="2" />
    <g fill="none" stroke="#d9dadc" strokeWidth="1.500">
      <rect x="431" y="227" width="1066" height="755" />
      <path d="M959.500 227V982M431 605H1497" />
    </g>
    <g fontFamily="'Liberation Serif', serif" fontStyle="italic" fill="#0ff">
      {titles.map(([x, y, t]) => <text key={t} x={x} y={y} fontSize="20">{t}</text>)}
      {legends.map((l, i) => l.rows.map(([y, t]) => <text key={`${i}-${t}`} x={l.x} y={y} fontSize="9">{t}</text>))}
    </g>

    <Clutch dx={0} dy={0} pivot={515} foot={540} />
    <Duo d="M598 540.500H731" />
    <Duo d="M735 515V537" />
    <Duo d="M735 515L706 487Q697 476 704 462L720 443" />
    <Duo d="M713 437L729 450" w={4} />
    <Coil x1={719} y1={495} x2={737} y2={479} h={4} />
    <Anchor x={735} y={515} />
    <Joint x={735} y={515} />
    <Joint x={735} y={540} />

    <Clutch dx={529} dy={0} pivot={502} foot={528} />
    <Duo d="M1081 528H1069Q1064 528 1064 533V551Q1064 557 1070 557H1159Q1165 557 1165 551V473Q1165 467 1171 467H1180" w={4} />
    <Cylinder x={1081} y={518} w={25} h={20} px={1088} rod={1119} />
    <Cylinder x={1180} y={457} w={30} h={20} px={1196} rod={1224} />
    <path d="M1182 462H1196M1182 472.500H1196" stroke="#f00" strokeWidth="2" strokeDasharray="2 1" />
    <Pedal dx={0} dy={0} />

    <Clutch dx={-5} dy={352} pivot={511} foot={528} />
    <Duo d="M547 880H535Q530 880 530 886V903Q530 909 536 909H657Q665 909 665 901V859" w={4} />
    <Duo d="M668 807H677Q685 807 685 815V831" w={4} />
    <rect x="635" y="794" width="33" height="25" rx="8" fill="none" stroke={W} strokeWidth="1.500" />
    <Duo d="M591 846H625" />
    <Duo d="M693 846H716" />
    <Cylinder x={547} y={870} w={25} h={20} px={553} rod={585} />
    <path d="M560 875H572M560 885.500H572" stroke={W} strokeDasharray="2 1" />
    <g fill="none" stroke={W} strokeWidth="1.300">
      <rect x="625" y="838" width="3" height="16" />
      <rect x="648" y="832" width="5" height="27" fill="url(#dense)" stroke="none" />
      <path d="M630 842L636 839H670V852H636L630 850Z" fill="url(#dense)" stroke="none" />
      <path d="M635 839V832H693V859H635V853M648 832V838M648 853V859M653 841H670V851H653M641 856V844H668M673 832V859M675 838V854M685 842H693M685 842V850H693M641 858V862M644 858V862" />
      <path d="M653 836H673M653 855.500H673M676 841L693 836M676 851L693 855" stroke="#f00" strokeWidth="1.600" strokeDasharray="3 1" />
      <path d="M619 845.500H699" stroke="#f00" strokeDasharray="14 1 3 1" />
    </g>
    <Joint x={589} y={846} />
    <Pedal dx={-508} dy={378} />

    <Clutch dx={520} dy={352} pivot={502} foot={528} />
    <Duo d="M1071 880H1060Q1054 880 1054 886V903Q1054 909 1060 909H1140Q1147 909 1147 901V853Q1147 846 1154 846H1163" w={4} />
    <Cylinder x={1072} y={870} w={25} h={20} px={1079} rod={1110} />
    <Duo d="M1201 824V763Q1201 757 1207 757H1231" w={4} />
    <g fill="none" stroke={W} strokeWidth="1.300">
      <path d="M1230 740V766Q1229 770 1214 780M1239.500 740V766Q1240 770 1255 780M1219 786L1231 779Q1235 777 1239 779L1250 786" />
      <path d="M1230 740H1240M1214 780L1219 786M1255 780L1250 786" stroke="#00f" />
      <path d="M1231 750Q1235 757 1231 761Z" fill="#ff0" stroke="#ff0" />
      <rect x="1163" y="838" width="28" height="16" />
      <rect x="1177" y="838" width="5" height="16" fill="url(#dense)" stroke="none" />
      <path d="M1165 841H1177M1165 850.500H1177M1192 836H1210M1192 856.500H1210" stroke="#f00" strokeWidth="1.800" strokeDasharray="2 1" />
      <path d="M1234 833L1226 825H1191V867H1226L1234 858M1234 834H1245V858H1232V834M1239 834V858M1245 836Q1249 837 1249 831" />
      <path d="M1210 834H1217V858H1210ZM1217 836Q1222 829 1229 833L1226 838L1222 842H1217ZM1217 852H1226V855H1244V858H1217Z" fill="url(#dense)" stroke="none" />
      <path d="M1213 825Q1218 832 1216 846T1214 867" stroke="#ff0" strokeWidth="1.800" />
      <path d="M1222 840L1232 837L1228 846L1232 855L1222 852Z" fill="#ff0" stroke="none" />
      <path d="M1217 841H1222V837M1227 855H1219V850H1215V842" stroke="#ddd" />
      <Duo d="M1245 846H1263" w={4} />
      <path d="M1182 846H1252" stroke="#e02020" strokeWidth="1.600" />
      <path d="M1232 839L1235 843M1232 853L1235 849" stroke="#f00" strokeWidth="2" />
    </g>
    <Pedal dx={39} dy={378} />

    {tags.map(([t, x, y, tx, ty, right], i) => (
      <g key={i}>
        <path d={`M${right ? x + 18 : x} ${y}L${tx} ${ty}`} stroke="#0000f5" strokeWidth="1.300" />
        <path d={`M${x} ${y - 0.5}H${x + 18}`} stroke="#ff0" strokeWidth="2" />
        <text x={x + 9} y={y - 3} textAnchor="middle" fontSize="13" fontFamily="'Liberation Serif', serif" fill="#0ff">{t}</text>
      </g>
    ))}

    <g fill="none" stroke="#e4e5e7" strokeWidth="1.300">
      <rect x="1327" y="923" width="170" height="59" fill={C.ink} />
      <path d="M1327 938.500H1497M1327 953H1497M1346 953V982M1374 953V982M1387 953V982M1396 953V982M1451 953V982M1474 953V968M1327 961H1396M1327 968H1396M1327 975H1396M1451 961H1497M1451 968H1497" />
    </g>
    {bars.map(([x, y, w, h]) => <rect key={`${x}-${y}`} x={x} y={y} width={w} height={h} fill="#0ff" />)}
    <g fontFamily="'Liberation Serif', serif" fontStyle="italic" textAnchor="middle">
      <text x="1412" y="935" fontSize="11" fill="#0ff">ĐỒ ÁN TỐT NGHIỆP</text>
      <text x="1424" y="966" fontSize="7" fill="#fff">CÁC PHƯƠNG ÁN</text>
      <text x="1424" y="975" fontSize="7" fill="#fff">DẪN ĐỘNG</text>
    </g>
  </svg>
);

const ViewCube = () => (
  <svg width="150" height="150" viewBox="0 0 150 150" aria-hidden="true">
    <circle cx="75" cy="76" r="59" fill="none" stroke="#454b53" strokeWidth="14" />
    <rect x="47" y="48" width="56" height="56" fill="#acaeb0" stroke="#8f9296" />
    <rect x="57" y="58" width="36" height="36" fill="#9fa6ab" />
    <g textAnchor="middle" fontFamily="'Liberation Sans', Arial, sans-serif" fontWeight="700" fontSize="23" fill="#b0b2b5">
      <text x="75" y="23">N</text>
      <text x="13" y="84">W</text>
      <text x="137" y="84">E</text>
      <text x="75" y="146">S</text>
      <text x="75" y="80" fontSize="12" fontFamily="'Open Sans', sans-serif" fill="#50565e">TOP</text>
    </g>
  </svg>
);

const NavIcons = () => (
  <svg width="38" height="257" viewBox="0 0 38 257" fill="none" stroke="#3f444b" strokeWidth="1.500" aria-hidden="true">
    <circle cx="33" cy="5" r="4" /><path d="M31 3L35 7M35 3L31 7" />
    <path d="M33 21V34A14 13 0 1 1 19 21Z" fill="#666b76" /><circle cx="19" cy="34" r="7" /><path d="M14 39L10 43M24 39L28 43" />
    <path d="M17 59H24L20.500 62Z" fill="#3f444b" stroke="none" />
    <path d="M3 67H36M3 201H36" stroke="#6c7074" />
    <path d="M11 99L5 89Q4 86 8 87L12 91L10 77Q12 73 14 77L16 85L17 74Q20 71 21 74L22 85L25 76Q28 74 28 78L27 87L31 81Q34 80 33 84L27 99Z" fill="#666b76" />
    <path d="M5 107L24 126M24 107L5 126M5 112V107H10M19 107H24V112M5 121V126H10" />
    <circle cx="25" cy="126" r="6" fill="#585c60" /><path d="M29 130L34 135" strokeWidth="3.500" />
    <path d="M17 146H24L20.500 149Z" fill="#3f444b" stroke="none" />
    <ellipse cx="19" cy="170" rx="14" ry="5" /><path d="M17 181V160H14L19 154L24 160H21V181Z" fill="#666b76" /><path d="M9 175L14 171V179Z" fill="#3f444b" />
    <path d="M17 193H24L20.500 196Z" fill="#3f444b" stroke="none" />
    <path d="M5 206H12V214H5ZM15 206H22V214H15ZM25 206H32V214H25ZM5 217H25V233H5Z" fill="#666b76" /><path d="M11 220L20 225L11 230Z" fill="#3f444b" />
    <circle cx="33" cy="250" r="4" /><path d="M31 249L33 252L35 249Z" />
  </svg>
);

const BigTool = ({ n, label, w, drop, mid }: { n: string; label: string[]; w: number; drop?: boolean; mid?: boolean }) => (
  <Big $w={w} $mid={mid}>
    <Ico n={n} s={40} />
    <span>{label.map((l, i) => <React.Fragment key={l}>{i > 0 && <br />}{l}</React.Fragment>)}</span>
    {drop && <Caret />}
  </Big>
);
const Tool = ({ n, label, drop }: { n: string; label?: string; drop?: boolean }) => (
  <Row aria-label={label || n}>
    <Ico n={n} />
    {label && <span>{label}</span>}
    {drop && <Caret />}
  </Row>
);
const Group = ({ w, title, drop = true, launch, foot, children }: { w?: number; title: string; drop?: boolean; launch?: boolean; foot?: number; children: React.ReactNode }) => (
  <Panel $w={w}>
    <Body>{children}</Body>
    <Foot $max={foot}>
      <FootBtn>{title}{drop && <Caret w={10} />}</FootBtn>
      {launch && <IconBtn aria-label={`${title} settings`}><Launch /></IconBtn>}
    </Foot>
  </Panel>
);
const PropPick = ({ name, lead }: { name: string; lead: React.ReactNode }) => (
  <Combo>
    {lead}
    <Pick aria-label={name}><option>ByLayer</option></Pick>
    <Caret w={10} />
  </Combo>
);

const menu = ["Insert", "Annotate", "Parametric", "View", "Manage", "Output", "Add-ins", "Collaborate", "Featured Apps", "Express Tools"];

export default function App() {
  return (
    <Shell>
      <Global />
      <Header>
        <AppMenu aria-label="Application menu">
          <svg width="34" height="40" viewBox="0 0 34 40">
            <path d="M12 2H21L33 36H25L16 9L9 36H1Z" fill="#d6262b" />
            <path d="M12 2H21L8 26L4 27Z" fill="#b31c22" />
            <path d="M7 27L23 22L25 27L9 32Z" fill="#e8453f" />
            <path d="M1 36L4 27L10 26L8 36ZM25 36L22 27H29L33 36Z" fill="#f08a80" />
          </svg>
        </AppMenu>
        <TitleBar>
          <Progress />
          <Quick>
            {["new", "open", "save", "saveas", "openWeb", "saveWeb", "print", "undo"].map((n) => <IconBtn key={n} aria-label={n}><Ico n={n} /></IconBtn>)}
            <Caret w={6} />
            <IconBtn aria-label="redo"><Ico n="redo" /></IconBtn>
            <Caret w={6} />
            <IconBtn aria-label="customize">
              <svg width="10" height="10" viewBox="0 0 10 10"><path d="M0 0H10V2H0ZM0 4H10L5 9Z" fill={C.g} /></svg>
            </IconBtn>
          </Quick>
          <Caption><span>Autodesk AutoCAD 2021</span><span>Bản vẽ CAD hệ thống ly hợp trên xe Toyota Fortuner.dwg</span></Caption>
          <svg width="5" height="10" viewBox="0 0 5 10"><path d="M0 0L5 5L0 10Z" fill={C.g} /></svg>
          <SearchBox placeholder="Type a keyword or phrase" aria-label="Search" />
          <IconBtn aria-label="search"><Ico n="search" /></IconBtn>
          <IconBtn $ml={9} aria-label="user"><Ico n="user" /></IconBtn>
          <IconBtn $ml={7}>Sign In</IconBtn>
          <IconBtn $ml={59} aria-label="account"><Caret w={6} /></IconBtn>
          <IconBtn $ml={14} aria-label="store"><Ico n="cart" /></IconBtn>
          <IconBtn $ml={9} aria-label="apps"><Ico n="a360" /></IconBtn>
          <IconBtn $ml={7} aria-label="more apps"><Caret w={6} /></IconBtn>
          <Rule />
          <IconBtn $ml={12}><HelpMark>?</HelpMark></IconBtn>
          <IconBtn $ml={10} aria-label="more help"><Caret w={6} /></IconBtn>
          <IconBtn $ml={85} aria-label="minimize"><Ico n="min" /></IconBtn>
          <IconBtn $ml={11} aria-label="restore"><Ico n="restore" /></IconBtn>
          <IconBtn $ml={11} aria-label="close"><Ico n="close" /></IconBtn>
        </TitleBar>
        <Tabs>
          <Tab $on>Home</Tab>
          {menu.map((m) => <Tab key={m}>{m}</Tab>)}
          <RibbonToggle aria-label="Minimize ribbon"><ToggleFace><Caret w={6} c="#444" /></ToggleFace><Caret w={6} /></RibbonToggle>
        </Tabs>
      </Header>

      <Ribbon>
        <Group w={276} title="Draw">
          <BigTool n="line" label={["Line"]} w={50} />
          <BigTool n="poly" label={["Polyline"]} w={58} />
          <BigTool n="circle" label={["Circle"]} w={62} drop />
          <BigTool n="arc" label={["Arc"]} w={54} drop />
          <Col $ml={3}><Tool n="rect" drop /><Tool n="ellipse" drop /><Tool n="hatch" drop /></Col>
        </Group>
        <Group w={315} title="Modify">
          <Col $ml={7} $w={91}><Tool n="move" label="Move" /><Tool n="copy" label="Copy" /><Tool n="stretch" label="Stretch" /></Col>
          <Col $w={89}><Tool n="rotate" label="Rotate" /><Tool n="mirror" label="Mirror" /><Tool n="scale" label="Scale" /></Col>
          <Col $w={94}><Tool n="trim" label="Trim" drop /><Tool n="fillet" label="Fillet" drop /><Tool n="array" label="Array" drop /></Col>
          <Col><Tool n="erase" /><Tool n="solid" /><Tool n="offset" /></Col>
        </Group>
        <Group w={210} title="Annotation">
          <BigTool n="text" label={["Text"]} w={60} drop />
          <BigTool n="dim" label={["Dimension"]} w={70} />
          <Col $ml={8}><Tool n="linear" drop /><Tool n="leader" drop /><Tool n="table" label="Table" /></Col>
        </Group>
        <Group w={340} title="Layers">
          <BigTool n="layerProps" label={["Layer", "Properties"]} w={77} />
          <LayerBox>
            <Combo>
              <Ico n="bulb" /><Ico n="sun" /><Ico n="unlock" />
              <Swatch $edge="#000" />
              <Pick aria-label="Layer"><option>Đường đậm</option></Pick>
              <Caret w={10} />
            </Combo>
            <LayerRow>
              {["lOff", "lIso", "lFrz", "lLock"].map((n) => <IconBtn key={n} aria-label={n}><Ico n={n} /></IconBtn>)}
              <Tool n="lCur" label="Make Current" />
            </LayerRow>
            <LayerRow>
              {["lOn", "lUniso", "lThaw", "lUnlock"].map((n) => <IconBtn key={n} aria-label={n}><Ico n={n} /></IconBtn>)}
              <Tool n="lMatch" label="Match Layer" />
            </LayerRow>
          </LayerBox>
        </Group>
        <Group w={99} title="Block">
          <BigTool n="insert" label={["Insert"]} w={52} drop />
          <Col $ml={3}><Tool n="bNew" /><Tool n="bEdit" /><Tool n="bAttr" drop /></Col>
        </Group>
        <Group w={276} title="Properties" launch>
          <BigTool n="match" label={["Match", "Properties"]} w={78} />
          <PropGrid>
            <Ico n="wheel" /><PropPick name="Color" lead={<Swatch $edge="#aaa" $mx={10} />} />
            <Ico n="lw" /><PropPick name="Lineweight" lead={<Stroke $h={5} />} />
            <Ico n="lt" /><PropPick name="Linetype" lead={<Stroke $h={1} />} />
          </PropGrid>
        </Group>
        <Group w={84} title="Groups">
          <BigTool n="group" label={["Group"]} w={51} />
          <Col>
            <ToggleBtn aria-label="Ungroup"><Ico n="ungroup" /></ToggleBtn>
            <ToggleBtn aria-label="Edit group"><Ico n="gedit" /></ToggleBtn>
            <ToggleBtn aria-label="Group selection" $on><Ico n="gsel" /></ToggleBtn>
          </Col>
        </Group>
        <Group w={120} title="Utilities">
          <BigTool n="measure" label={["Measure"]} w={88} drop />
          <Col $ml={3}><Tool n="qsel" /><Tool n="selAll" /><Tool n="calc" /></Col>
        </Group>
        <Group w={98} title="Clipboard" drop={false}>
          <BigTool n="paste" label={["Paste"]} w={66} drop />
          <Col $ml={3}><Tool n="cut" /><Tool n="clip" /></Col>
        </Group>
        <Group title="View" launch foot={76}>
          <BigTool n="base" label={["Base"]} w={78} drop mid />
        </Group>
      </Ribbon>

      <DocTabs>
        <DocTab $w={158}>Start</DocTab>
        <DocTab $on $w={343}>
          Bản vẽ CAD hệ thống... xe Toyota Fortuner*
          <IconBtn aria-label="Close drawing"><svg width="12" height="12" viewBox="0 0 12 12" stroke="#b4b9c1" strokeWidth="2.500"><path d="M1 1L11 11M11 1L1 11" /></svg></IconBtn>
        </DocTab>
        <AddTab aria-label="New drawing">+</AddTab>
      </DocTabs>

      <Canvas>
        <Sheet />
        <ViewLabel>[−][Top][2D Wireframe]</ViewLabel>
        <WinButtons>
          <IconBtn aria-label="Minimize view"><Svg><path d="M4 14.500H16" stroke="#fff" strokeWidth="4" /></Svg></IconBtn>
          <IconBtn aria-label="Restore view"><Svg><path d="M7 4.500H16V13" stroke="#ccc" strokeWidth="1.500" /><rect x="5" y="8" width="7" height="7" stroke="#fff" strokeWidth="3" /></Svg></IconBtn>
          <IconBtn aria-label="Close view"><Svg><path d="M5 5L15 15M15 5L5 15" stroke="#fff" strokeWidth="3" /></Svg></IconBtn>
        </WinButtons>
        <Cube><ViewCube /></Cube>
        <Wcs>WCS<svg width="11" height="6" viewBox="0 0 11 6" fill="#b5b6c2" stroke="#6f7080"><path d="M1 .5H10L5.500 5.500Z" /></svg></Wcs>
        <NavBar><NavIcons /></NavBar>
        <Ucs>
          <svg width="96" height="106" viewBox="0 -8 96 106" fill="none" stroke="#e6e7e9" strokeWidth="1.200">
            <rect x="4.500" y="79.500" width="11" height="11" />
            <path d="M9.500 85.500V23M9.500 85.500H72" />
            <g fill="#e6e7e9" stroke="none" fontFamily="Lato, sans-serif" fontWeight="300" fontSize="21" textAnchor="middle">
              <text x="18" y="19">Y</text>
              <text x="83" y="84">X</text>
            </g>
          </svg>
        </Ucs>
        <CommandArea>
          <History>
            <Chip $c="#b4b4b4">Command:</Chip>
            <Chip $c="#dcdcdc">Specify corner of window, enter a scale factor (nX or nXP), or</Chip>
            <Chip $c="#fff">[All/Center/Dynamic/Extents/Previous/Scale/Window/Object] &lt;real time&gt;:</Chip>
          </History>
          <CommandBar>
            <Handle>
              <svg width="7" height="22" viewBox="0 0 7 22" stroke="#c8cacd" strokeWidth="2" strokeDasharray="2 2"><path d="M1 0V22M6 0V22" /></svg>
              <IconBtn aria-label="Close command line"><svg width="12" height="12" viewBox="0 0 12 12" stroke="#c8cacd" strokeWidth="2.500"><path d="M1 1L11 11M11 1L1 11" /></svg></IconBtn>
              <IconBtn $ml={6} aria-label="Customize"><svg width="20" height="20" viewBox="0 0 20 20" fill="#c8cacd"><path d="M1 16L10 8Q9 3 14 1L17 1L13 4L16 7L19 4Q20 9 16 10.500Q14 11 12 10.500L4 19Q1 19 1 16Z" /></svg></IconBtn>
            </Handle>
            <CommandField>
              <svg width="20" height="16" viewBox="0 0 20 16" fill="none" stroke="#5d6065"><rect x=".5" y=".5" width="19" height="15" /><path d="M0 2.500H20" strokeWidth="4" /><path d="M2 7L5 9.500L2 12M7 12.500H11" /></svg>
              <Caret c="#5d6065" w={10} />
              <CommandInput placeholder="Type a command" aria-label="Command" />
              <svg width="8" height="5" viewBox="0 0 8 5"><path d="M0 5L4 0L8 5Z" fill="#444" /></svg>
            </CommandField>
          </CommandBar>
        </CommandArea>
      </Canvas>

      <Bottom>
        <Layouts>
          <LayoutTab $on $w={71}>Model</LayoutTab>
          <LayoutTab $w={80}>Layout1</LayoutTab>
          <LayoutTab $w={80}>Layout2</LayoutTab>
          <AddTab aria-label="New layout">+</AddTab>
        </Layouts>
        <Status>
          <StatBtn $w={60}>MODEL</StatBtn>
          <StatBtn $on aria-label="Grid"><Ico n="sGrid" /></StatBtn>
          <StatBtn $on $w={29} aria-label="Snap"><Ico n="sSnap" /></StatBtn>
          <StatBtn $w={22} aria-label="Snap options"><Caret w={10} /></StatBtn>
          <StatBtn $ml={1} aria-label="Infer"><Ico n="sInfer" /></StatBtn>
          <StatBtn $on aria-label="Dynamic input"><Ico n="sDyn" /></StatBtn>
          <StatBtn aria-label="Ortho"><Ico n="sOrtho" /></StatBtn>
          <StatBtn $w={49} aria-label="Polar"><Ico n="sPolar" /><Caret w={10} /></StatBtn>
          <StatBtn $w={49} aria-label="Isometric"><Ico n="sIso" /><Caret w={10} /></StatBtn>
          <StatBtn $on $w={29} aria-label="Tracking"><Ico n="sTrack" /></StatBtn>
          <StatBtn $on $w={29} aria-label="Object snap"><Ico n="sOsnap" /></StatBtn>
          <StatBtn $w={20} aria-label="Object snap options"><Caret w={10} /></StatBtn>
          <StatBtn aria-label="Lineweight"><Ico n="sLw" /></StatBtn>
          <StatBtn $on aria-label="Transparency"><Ico n="sTrans" /></StatBtn>
          <StatBtn aria-label="Selection cycling"><Ico n="sCycle" /></StatBtn>
          <StatBtn $w={52} aria-label="3D snap"><Ico n="s3d" /><Caret w={10} /></StatBtn>
          <StatBtn aria-label="Dynamic UCS"><Ico n="sUcs" /></StatBtn>
          <StatBtn $on $w={29} aria-label="Filtering"><Ico n="sFilt" /></StatBtn>
          <StatBtn $w={22} aria-label="Filter options"><Caret w={10} /></StatBtn>
          <StatBtn $on aria-label="Annotation"><Ico n="sAnno" /></StatBtn>
          <StatBtn $w={69} $ml={1} aria-label="Workspace"><Ico n="sWork" /><Ico n="sMon" /></StatBtn>
          <StatBtn aria-label="Customization"><Ico n="sMenu" /></StatBtn>
        </Status>
      </Bottom>
    </Shell>
  );
}
